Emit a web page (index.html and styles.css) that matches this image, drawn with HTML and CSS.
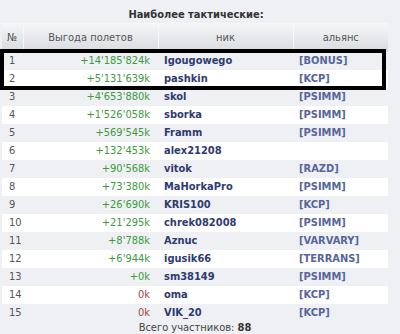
FILE: index.html
```html
<!DOCTYPE html>
<html lang="ru">
<head>
<meta charset="utf-8">
<title>Наиболее тактические</title>
<link rel="stylesheet" href="styles.css">
</head>
<body>
<div class="wrap">
  <div class="title">Наиболее тактические:</div>
  <div class="tablebox">
    <table class="rank">
      <colgroup>
        <col class="c-num"><col class="c-val"><col class="c-nick"><col class="c-ally">
      </colgroup>
      <thead>
        <tr><th>№</th><th>Выгода полетов</th><th>ник</th><th>альянс</th></tr>
      </thead>
      <tbody>
        <tr><td class="num">1</td><td class="val pos">+14'185'824k</td><td class="nick">Igougowego</td><td class="ally">[BONUS]</td></tr>
        <tr><td class="num">2</td><td class="val pos">+5'131'639k</td><td class="nick">pashkin</td><td class="ally">[KCP]</td></tr>
        <tr><td class="num">3</td><td class="val pos">+4'653'880k</td><td class="nick">skol</td><td class="ally">[PSIMM]</td></tr>
        <tr><td class="num">4</td><td class="val pos">+1'526'058k</td><td class="nick">sborka</td><td class="ally">[PSIMM]</td></tr>
        <tr><td class="num">5</td><td class="val pos">+569'545k</td><td class="nick">Framm</td><td class="ally">[PSIMM]</td></tr>
        <tr><td class="num">6</td><td class="val pos">+132'453k</td><td class="nick">alex21208</td><td class="ally"></td></tr>
        <tr><td class="num">7</td><td class="val pos">+90'568k</td><td class="nick">vitok</td><td class="ally">[RAZD]</td></tr>
        <tr><td class="num">8</td><td class="val pos">+73'380k</td><td class="nick">MaHorkaPro</td><td class="ally">[PSIMM]</td></tr>
        <tr><td class="num">9</td><td class="val pos">+26'690k</td><td class="nick">KRIS100</td><td class="ally">[KCP]</td></tr>
        <tr><td class="num">10</td><td class="val pos">+21'295k</td><td class="nick">chrek082008</td><td class="ally">[PSIMM]</td></tr>
        <tr><td class="num">11</td><td class="val pos">+8'788k</td><td class="nick">Aznuc</td><td class="ally">[VARVARY]</td></tr>
        <tr><td class="num">12</td><td class="val pos">+6'944k</td><td class="nick">igusik66</td><td class="ally">[TERRANS]</td></tr>
        <tr><td class="num">13</td><td class="val pos">+0k</td><td class="nick">sm38149</td><td class="ally">[PSIMM]</td></tr>
        <tr><td class="num">14</td><td class="val zero">0k</td><td class="nick">oma</td><td class="ally">[KCP]</td></tr>
        <tr><td class="num">15</td><td class="val zero">0k</td><td class="nick">VIK_20</td><td class="ally">[KCP]</td></tr>
      </tbody>
    </table>
    <div class="highlight"></div>
  </div>
  <div class="total">Всего участников: <b>88</b></div>
</div>
</body>
</html>
```

FILE: styles.css
```css
html, body {
  margin: 0;
  padding: 0;
  background: #eef0f3;
}

body {
  font-family: "DejaVu Sans Condensed", "DejaVu Sans", Verdana, sans-serif;
  font-stretch: condensed;
  font-size: 11px;
  color: #555;
}

.wrap {
  width: 386px;
  margin-left: 2px;
}

.title {
  text-align: center;
  font-weight: bold;
  color: #333;
  padding-top: 7px;
  line-height: 16px;
  height: 16px;
  padding-left: 2px;
}

.tablebox {
  position: relative;
}

.rank {
  width: 386px;
  table-layout: fixed;
  border-collapse: collapse;
}

.c-num { width: 21px; }
.c-val { width: 135px; }
.c-nick { width: 135px; }
.c-ally { width: 95px; }

.rank th {
  height: 29px;
  padding: 0;
  font-weight: normal;
  color: #555;
  text-align: center;
  background: linear-gradient(#f5f6f7, #d8dbdf);
  border-right: 1px solid #f6f7f8;
}

.rank th:last-child {
  border-right: 0;
}

.rank td {
  height: 18px;
  padding: 0;
  line-height: 18px;
  white-space: nowrap;
}

.rank tbody tr:nth-child(odd) td {
  background: #eef0f3;
}

.rank tbody tr:nth-child(even) td {
  background: #ffffff;
}

.num {
  padding-left: 7px !important;
  color: #555;
}

.val {
  text-align: right;
  padding-right: 8px !important;
}

.pos { color: #3f9a3f; }
.zero { color: #a04a4a; }

.nick {
  padding-left: 6px !important;
  font-weight: bold;
  color: #2f3b70;
}

.ally {
  padding-left: 6px !important;
  font-weight: bold;
  color: #56659b;
}

.highlight {
  position: absolute;
  left: -2px;
  top: 26px;
  width: 378px;
  height: 33px;
  border: 4px solid #000;
  pointer-events: none;
}

.total {
  text-align: center;
  line-height: 12px;
  color: #444;
}

.total b {
  color: #333;
}
```
